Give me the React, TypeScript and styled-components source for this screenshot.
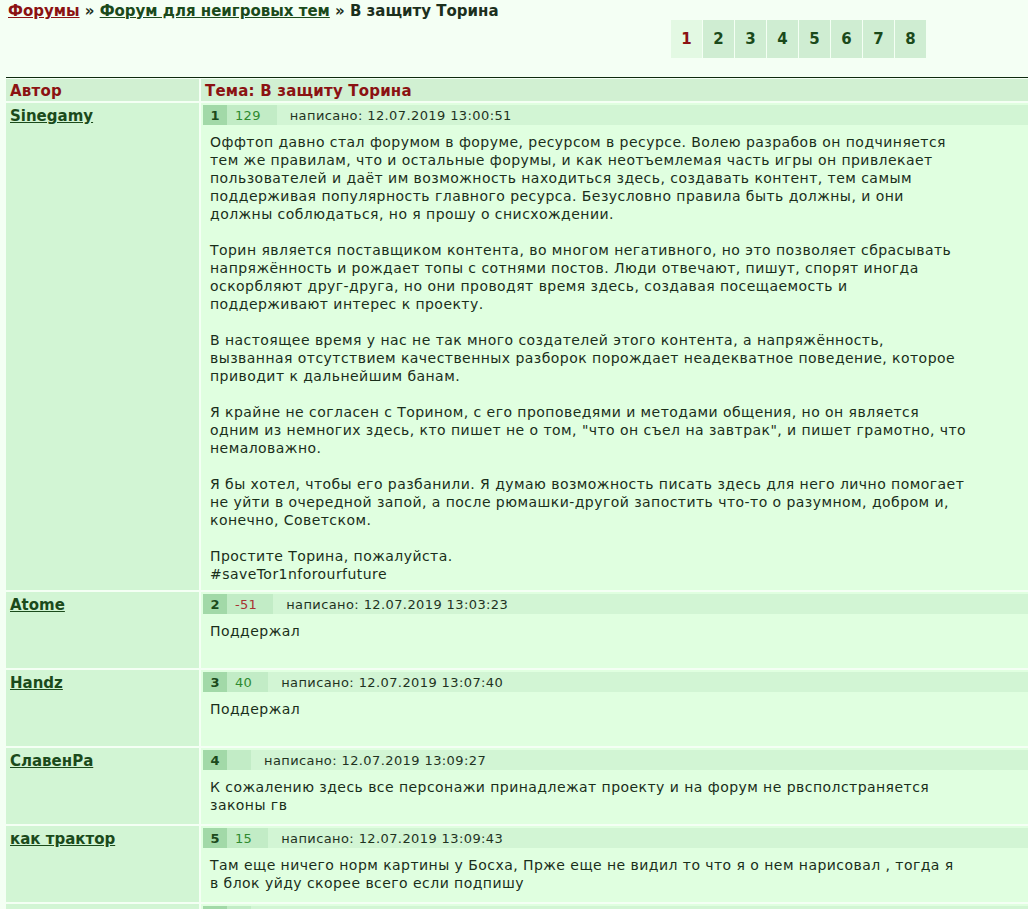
import React from 'react';
import styled, { createGlobalStyle } from 'styled-components';

const GlobalStyle = createGlobalStyle`
    html, body {
        margin: 0;
        padding: 0;
        background: #f4fff4;
        overflow-x: hidden;
    }
    body {
        font-family: "DejaVu Sans", Verdana, sans-serif;
        color: #1a2e1a;
    }
`;

const Page = styled.div`
    width: 1100px;
    padding-top: 2px;
`;

// Breadcrumbs
const Crumbs = styled.div`
    padding-left: 8px;
    font-size: 15px;
    font-weight: bold;
    line-height: 18px;
    color: #1c2f1c;
`;

const CrumbLink = styled.a<{ $root?: boolean }>`
    color: ${({ $root }) => ($root ? '#8b1212' : '#1b4a1b')};
    text-decoration: underline;
`;

// Page switcher
const Pager = styled.div`
    display: flex;
    gap: 1px;
    margin: 0 0 19px 671px;
`;

const PageCell = styled.a<{ $current?: boolean }>`
    display: flex;
    align-items: center;
    justify-content: center;
    width: 31px;
    height: 38px;
    background: ${({ $current }) => ($current ? '#e3f9e3' : '#cfedd2')};
    color: ${({ $current }) => ($current ? '#8b1212' : '#1b4a1b')};
    font-size: 15px;
    font-weight: bold;
`;

// Topic table
const Table = styled.div`
    margin-left: 6px;
    border-top: 1px solid #0e2a0e;
    padding-top: 1px;
    display: grid;
    grid-template-columns: 193px 1fr;
    column-gap: 2px;
    row-gap: 2px;
`;

const HeadCell = styled.div`
    background: #d1f0d2;
    height: 22px;
    line-height: 24px;
    padding-left: 4px;
    font-size: 15px;
    font-weight: bold;
    letter-spacing: 0.2px;
    color: #8b1212;
`;

const AuthorCell = styled.div`
    background: #d2f5d4;
    padding: 3px 4px;
`;

const AuthorName = styled.a`
    font-size: 15px;
    font-weight: bold;
    line-height: 18px;
    color: #1b4a1b;
    text-decoration: underline;
`;

const PostCell = styled.div`
    background: #e0ffe0;
    padding: 2px 0 0 2px;
`;

const PostBar = styled.div`
    display: flex;
    align-items: center;
    height: 20px;
    background: #d2f5d4;
    font-size: 13px;
`;

const PostNum = styled.div`
    width: 24px;
    height: 100%;
    display: flex;
    align-items: center;
    justify-content: center;
    background: #a2d9a8;
    font-weight: bold;
    color: #1b4a1b;
`;

const Rating = styled.div<{ $negative?: boolean }>`
    height: 100%;
    display: flex;
    align-items: center;
    padding: 0 16px 0 8px;
    background: #c2ecc6;
    letter-spacing: 0.3px;
    color: ${({ $negative }) => ($negative ? '#a83232' : '#2f8a2f')};
`;

const Posted = styled.div`
    margin-left: 13px;
    letter-spacing: 0.4px;
    color: #1f331f;
`;

const PostBody = styled.div`
    padding: 8px 8px 7px 7px;
    min-height: 39px;
    font-size: 14px;
    line-height: 18px;
    letter-spacing: 0.45px;
    white-space: nowrap;
`;

type Post = {
    author: string;
    num: number;
    rating: number | null;
    posted: string;
    lines: string[];
};

const posts: Post[] = [
    {
        author: 'Sinegamy',
        num: 1,
        rating: 129,
        posted: '12.07.2019 13:00:51',
        lines: [
            'Оффтоп давно стал форумом в форуме, ресурсом в ресурсе. Волею разрабов он подчиняется',
            'тем же правилам, что и остальные форумы, и как неотъемлемая часть игры он привлекает',
            'пользователей и даёт им возможность находиться здесь, создавать контент, тем самым',
            'поддерживая популярность главного ресурса. Безусловно правила быть должны, и они',
            'должны соблюдаться, но я прошу о снисхождении.',
            '',
            'Торин является поставщиком контента, во многом негативного, но это позволяет сбрасывать',
            'напряжённость и рождает топы с сотнями постов. Люди отвечают, пишут, спорят иногда',
            'оскорбляют друг-друга, но они проводят время здесь, создавая посещаемость и',
            'поддерживают интерес к проекту.',
            '',
            'В настоящее время у нас не так много создателей этого контента, а напряжённость,',
            'вызванная отсутствием качественных разборок порождает неадекватное поведение, которое',
            'приводит к дальнейшим банам.',
            '',
            'Я крайне не согласен с Торином, с его проповедями и методами общения, но он является',
            'одним из немногих здесь, кто пишет не о том, "что он съел на завтрак", и пишет грамотно, что',
            'немаловажно.',
            '',
            'Я бы хотел, чтобы его разбанили. Я думаю возможность писать здесь для него лично помогает',
            'не уйти в очередной запой, а после рюмашки-другой запостить что-то о разумном, добром и,',
            'конечно, Советском.',
            '',
            'Простите Торина, пожалуйста.',
            '#saveTor1nforourfuture',
        ],
    },
    {
        author: 'Atome',
        num: 2,
        rating: -51,
        posted: '12.07.2019 13:03:23',
        lines: ['Поддержал'],
    },
    {
        author: 'Handz',
        num: 3,
        rating: 40,
        posted: '12.07.2019 13:07:40',
        lines: ['Поддержал'],
    },
    {
        author: 'СлавенРа',
        num: 4,
        rating: null,
        posted: '12.07.2019 13:09:27',
        lines: [
            'К сожалению здесь все персонажи принадлежат проекту и на форум не рвсполстраняется',
            'законы гв',
        ],
    },
    {
        author: 'как трактор',
        num: 5,
        rating: 15,
        posted: '12.07.2019 13:09:43',
        lines: [
            'Там еще ничего норм картины у Босха, Прже еще не видил то что я о нем нарисовал , тогда я',
            'в блок уйду скорее всего если подпишу',
        ],
    },
    {
        author: '',
        num: 6,
        rating: null,
        posted: '',
        lines: [''],
    },
];

const pages = [1, 2, 3, 4, 5, 6, 7, 8];

const App: React.FC = () => {
    return (
        <Page>
            <GlobalStyle />
            <Crumbs>
                <CrumbLink $root href="#">Форумы</CrumbLink> » <CrumbLink href="#">Форум для неигровых тем</CrumbLink> » В защиту Торина
            </Crumbs>
            <Pager>
                {pages.map((p) => (
                    <PageCell key={p} $current={p === 1}>{p}</PageCell>
                ))}
            </Pager>
            <Table>
                <HeadCell>Автор</HeadCell>
                <HeadCell>Тема: В защиту Торина</HeadCell>
                {posts.map((post) => (
                    <React.Fragment key={post.num}>
                        <AuthorCell>
                            <AuthorName href="#">{post.author}</AuthorName>
                        </AuthorCell>
                        <PostCell>
                            <PostBar>
                                <PostNum>{post.num}</PostNum>
                                <Rating $negative={post.rating !== null && post.rating < 0}>
                                    {post.rating ?? ''}
                                </Rating>
                                {post.posted && <Posted>написано: {post.posted}</Posted>}
                            </PostBar>
                            <PostBody>
                                {post.lines.map((line, i) => (
                                    <React.Fragment key={i}>
                                        {i > 0 && <br />}
                                        {line}
                                    </React.Fragment>
                                ))}
                            </PostBody>
                        </PostCell>
                    </React.Fragment>
                ))}
            </Table>
        </Page>
    );
};

export default App;
